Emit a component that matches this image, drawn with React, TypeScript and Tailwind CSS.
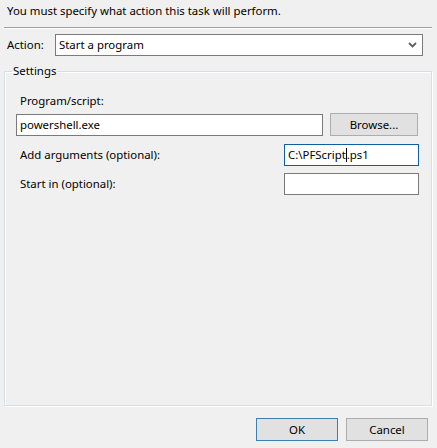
const font = { fontFamily: '"Noto Sans", "Segoe UI", sans-serif' };

function TextBox({ value, focused, className }: { value?: React.ReactNode; focused?: boolean; className: string }) {
  return (
    <div
      className={`h-[22px] bg-white border flex items-center pl-[3px] text-black ${
        focused ? "border-[#0f5fa3]" : "border-[#7a7a7a]"
      } ${className}`}
    >
      {value}
    </div>
  );
}

function Button({ label, primary, className }: { label: string; primary?: boolean; className: string }) {
  return (
    <div
      className={`h-[23px] bg-[#e1e1e1] border flex items-center justify-center text-black ${
        primary ? "border-[#3c7fb1]" : "border-[#adadad]"
      } ${className}`}
    >
      {label}
    </div>
  );
}

export default function App() {
  return (
    <div style={font} className="w-[437px] h-[448px] bg-[#f0f0f0] text-[11.4px] leading-[16px] text-black flex flex-col overflow-hidden">
      <p className="pl-[7px] pt-[3px]">You must specify what action this task will perform.</p>

      <div className="mx-[4px] mt-[8px] w-[428px] border-t border-[#a0a0a0] border-b border-b-white" />

      <div className="flex items-center mt-[5px] pl-[7px]">
        <span className="w-[48px]">Action:</span>
        <div className="w-[368px] h-[22px] bg-white border border-[#7a7a7a] flex items-center justify-between pl-[3px] pr-[5px]">
          <span>Start a program</span>
          <svg width="9" height="6" viewBox="0 0 9 6">
            <path d="M1 1 L4.5 4.5 L8 1" fill="none" stroke="#606060" strokeWidth="1.8" />
          </svg>
        </div>
      </div>

      <fieldset className="ml-[4px] mt-[7px] w-[428px] h-[343px] border border-[#d5dfe5] shadow-[inset_1px_1px_0_#fff,1px_1px_0_#fff] pl-[11px] pr-[12px]">
        <legend className="-ml-[4px] px-px leading-[16px]">Settings</legend>
        <p className="mt-[14px] pl-[4px]">Program/script:</p>
        <div className="flex items-center mt-[4px]">
          <TextBox className="w-[307px]" value="powershell.exe" />
          <Button className="ml-[7px] w-[88px]" label="Browse..." />
        </div>
        <div className="flex items-center justify-between mt-[8px]">
          <span className="pl-[4px]">Add arguments (optional):</span>
          <TextBox
            className="w-[135px]"
            focused
            value={
              <span className="flex items-center">
                C:\PFScript
                <span className="inline-block w-px h-[14px] bg-black" />
                .ps1
              </span>
            }
          />
        </div>
        <div className="flex items-center justify-between mt-[7px]">
          <span className="pl-[4px]">Start in (optional):</span>
          <TextBox className="w-[135px]" />
        </div>
      </fieldset>

      <div className="flex justify-end gap-[8px] mt-[12px] pr-[9px]">
        <Button className="w-[82px]" label="OK" primary />
        <Button className="w-[82px] border-[#707070]" label="Cancel" />
      </div>
    </div>
  );
}
